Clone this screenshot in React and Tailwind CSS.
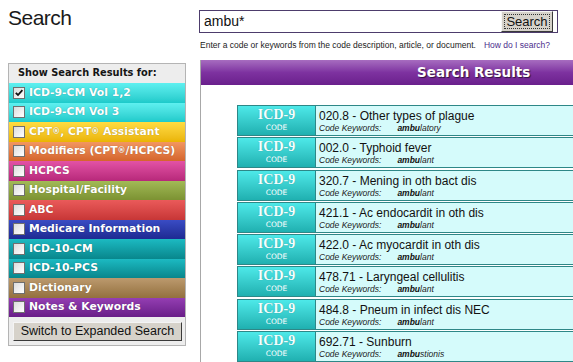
import React from "react";

const cats = [
  { label: "ICD-9-CM Vol 1,2", cls: "bg-linear-to-b from-[#5ef0f0] to-[#1ccaca]", checked: true },
  { label: "ICD-9-CM Vol 3", cls: "bg-linear-to-b from-[#5ef0f0] to-[#1ccaca]" },
  { label: "cpt", cls: "bg-linear-to-b from-[#ffdc40] to-[#eab400]" },
  { label: "mod", cls: "bg-linear-to-b from-[#f29660] to-[#d4652c]" },
  { label: "HCPCS", cls: "bg-linear-to-b from-[#e352a6] to-[#b7287a]" },
  { label: "Hospital/Facility", cls: "bg-linear-to-b from-[#a2ba56] to-[#7c9232]" },
  { label: "ABC", cls: "bg-linear-to-b from-[#ea5a5a] to-[#c73636]" },
  { label: "Medicare Information", cls: "bg-linear-to-b from-[#3a4cc4] to-[#1e2a92]" },
  { label: "ICD-10-CM", cls: "bg-linear-to-b from-[#1cbac2] to-[#08868c]" },
  { label: "ICD-10-PCS", cls: "bg-linear-to-b from-[#1cbac2] to-[#08868c]" },
  { label: "Dictionary", cls: "bg-linear-to-b from-[#bc9a6e] to-[#93703e]" },
  { label: "Notes & Keywords", cls: "bg-linear-to-b from-[#943eb2] to-[#691d88]" },
];

const results = [
  ["020.8 - Other types of plague", "ambu", "latory"],
  ["002.0 - Typhoid fever", "ambu", "lant"],
  ["320.7 - Mening in oth bact dis", "ambu", "lant"],
  ["421.1 - Ac endocardit in oth dis", "ambu", "lant"],
  ["422.0 - Ac myocardit in oth dis", "ambu", "lant"],
  ["478.71 - Laryngeal cellulitis", "ambu", "lant"],
  ["484.8 - Pneum in infect dis NEC", "ambu", "lant"],
  ["692.71 - Sunburn", "ambu", "stionis"],
];

function Label({ label }) {
  if (label === "cpt")
    return (
      <span>
        CPT<sup className="text-[8px] relative -top-[1px]">®</sup>, CPT<sup className="text-[8px] relative -top-[1px]">®</sup> Assistant
      </span>
    );
  if (label === "mod")
    return (
      <span>
        Modifiers (CPT<sup className="text-[8px] relative -top-[1px]">®</sup>/HCPCS)
      </span>
    );
  return <span>{label}</span>;
}

function Box({ checked }) {
  return (
    <span className="w-[12px] h-[12px] shrink-0 bg-linear-to-br from-[#dcdcdc] to-white border border-[#6f6f6f] flex items-center justify-center">
      {checked && (
        <svg width="10" height="10" viewBox="0 0 10 10">
          <path d="M1.8 4.8 L4 7 L8.4 2.2" stroke="#111" strokeWidth="1.8" fill="none" />
        </svg>
      )}
    </span>
  );
}

export default function App() {
  return (
    <div className="w-[573px] h-[362px] overflow-hidden bg-white flex font-['Liberation_Sans',Arial,sans-serif] text-black">
      {/* Left column */}
      <div className="w-[199px] shrink-0 flex flex-col pl-[8px]">
        <div className="h-[63px] pt-[5px] text-[21px] leading-[26px] text-[#1a1a1a] tracking-[-0.5px]">Search</div>
        <div className="w-[178px] border border-[#b4b4b4] bg-[#ededed] flex flex-col">
          <div className="h-[19px] pl-[9px] flex items-center font-['DejaVu_Sans',sans-serif] font-bold text-[9.8px] text-[#151515]">
            Show Search Results for:
          </div>
          {cats.map((c, i) => (
            <div
              key={i}
              className={`h-[19.5px] flex items-center gap-[4px] pl-[4px] font-['DejaVu_Sans',sans-serif] font-bold text-[10.8px] text-white [text-shadow:0_0_1px_rgba(0,0,0,0.35)] whitespace-nowrap ${c.cls}`}
            >
              <Box checked={c.checked} />
              <Label label={c.label} />
            </div>
          ))}
          <div className="pt-[5px] pb-[4px] pl-[4px]">
            <div className="w-[169px] h-[19px] bg-[#d6d2ca] border border-t-[#f4f4f4] border-l-[#f4f4f4] border-r-[#3a3a3a] border-b-[#3a3a3a] flex items-center justify-center text-[12.5px] text-[#111]">
              Switch to Expanded Search
            </div>
          </div>
        </div>
      </div>

      {/* Right column */}
      <div className="flex-1 flex flex-col min-w-0">
        <div className="mt-[10px] w-[359px] h-[26px] border border-[#4d3c6c] flex items-center justify-between pl-[4px] pr-[4px]">
          <span className="text-[14px] text-[#111]">ambu*</span>
          <div className="w-[52px] h-[21px] bg-[#d6d2ca] border border-t-[#f6f6f6] border-l-[#f6f6f6] border-r-[#3a3a3a] border-b-[#3a3a3a] flex items-center justify-center p-[2px]">
            <span className="w-full h-full border border-dotted border-[#333] flex items-center justify-center text-[13px] leading-none text-[#111]">
              Search
            </span>
          </div>
        </div>
        <div className="mt-[6px] h-[12px] pl-[1px] flex items-center whitespace-nowrap text-[8.5px] text-[#222]">
          <span>Enter a code or keywords from the code description, article, or document.</span>
          <span className="ml-[8px] text-[#4b2d8c]">How do I search?</span>
        </div>

        <div className="mt-[9px] ml-[1px] flex-1 border-l border-[#a8a8a8] flex flex-col">
          <div className="h-[25px] w-[400px] bg-linear-to-b from-[#a76cc0] via-[#7e32a0] to-[#6a1f8c] flex items-center pl-[216px] font-['DejaVu_Sans',sans-serif] font-bold text-[13.5px] text-white [text-shadow:1px_1px_1px_rgba(0,0,0,0.6)] whitespace-nowrap">
            Search Results
          </div>
          <div className="pt-[20px] pl-[36px] flex flex-col gap-[1.3px]">
            {results.map((r, i) => (
              <div key={i} className="w-[360px] h-[31px] shrink-0 border border-[#2e8787] flex">
                <div className="w-[78px] shrink-0 bg-linear-to-b from-[#4de9e9] to-[#1fb0b0] flex flex-col items-center border-r border-[#2e8787]">
                  <span className="font-['Liberation_Serif',serif] font-bold text-[14px] leading-[15px] mt-[1px] text-[#f2ffff] [text-shadow:0_0_1px_rgba(0,0,0,0.3)]">
                    ICD-9
                  </span>
                  <span className="font-['DejaVu_Sans',sans-serif] text-[7.5px] leading-[11px] text-white">CODE</span>
                </div>
                <div className="flex-1 bg-[#d5fbfb] pl-[3px] flex flex-col">
                  <span className="text-[12px] leading-[14px] mt-[3px] text-[#111] whitespace-nowrap">{r[0]}</span>
                  <span className="text-[8.5px] leading-[11px] italic text-[#222] whitespace-nowrap">
                    Code Keywords:
                    <span className="ml-[16px] font-bold text-[#111]">{r[1]}</span>
                    {r[2]}
                  </span>
                </div>
              </div>
            ))}
          </div>
        </div>
      </div>
    </div>
  );
}
